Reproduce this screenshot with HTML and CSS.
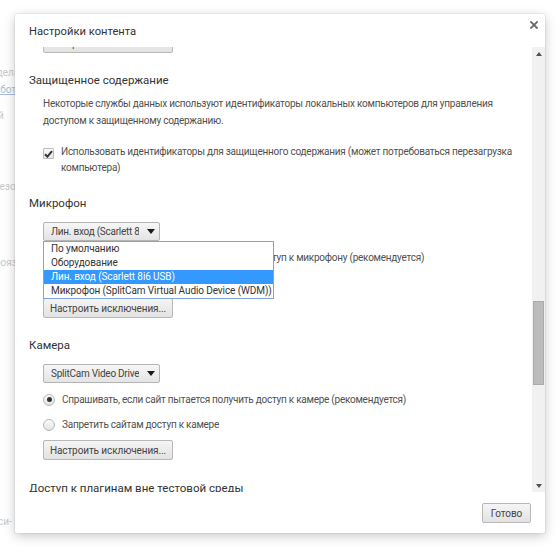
FILE: index.html
```html
<!DOCTYPE html>
<html lang="ru">
<head>
<meta charset="utf-8">
<title>Настройки контента</title>
<link rel="stylesheet" href="styles.css">
</head>
<body>
<div class="page">
  <div class="bgline l1">Разделать</div>
  <div class="bgline l2 link">обработка</div>
  <div class="bgline l3">й</div>
  <div class="bgline l4">безопасность</div>
  <div class="bgline l5">боязнь</div>
  <div class="bgline l6">си-</div>
</div>

<div class="dialog">
  <div class="dlg-head">
    <div class="dlg-title">Настройки контента</div>
    <svg class="close" width="8" height="8" viewBox="0 0 8 8"><path d="M1 1L7 7M7 1L1 7" stroke="#6a6a6a" stroke-width="1.8" stroke-linecap="square"/></svg>
  </div>
  <div class="dlg-body">
    <div class="scroll">
      <div class="scroll-inner">
        <div class="indent"><div class="btn btn-wide">Настроить исключения...</div></div>

        <div class="sec-title s-protected">Защищенное содержание</div>
        <div class="indent desc">Некоторые службы данных используют идентификаторы локальных компьютеров для управления<br>доступом к защищенному содержанию.</div>
        <div class="indent check-row">
          <span class="checkbox"><svg width="9" height="8" viewBox="0 0 9 8"><path d="M1 4.2L3.4 6.6L8 1.2" fill="none" stroke="#333" stroke-width="2"/></svg></span>
          <span class="check-text">Использовать идентификаторы для защищенного содержания (может потребоваться перезагрузка<br>компьютера)</span>
        </div>

        <div class="sec-title s-mic">Микрофон</div>
        <div class="indent select-wrap">
          <div class="select"><span class="select-text">Лин. вход (Scarlett 8i6 USB)</span><span class="arrow"></span></div>
          <div class="droplist">
            <div class="opt">По умолчанию</div>
            <div class="opt">Оборудование</div>
            <div class="opt sel">Лин. вход (Scarlett 8i6 USB)</div>
            <div class="opt">Микрофон (SplitCam Virtual Audio Device (WDM))</div>
          </div>
        </div>
        <div class="indent radio-row first"><span class="radio on"></span><span>Спрашивать, если сайт пытается получить доступ к микрофону (рекомендуется)</span></div>
        <div class="indent radio-row"><span class="radio"></span><span>Запретить сайтам доступ к микрофону</span></div>
        <div class="indent btn-row"><div class="btn btn-wide">Настроить исключения...</div></div>

        <div class="sec-title s-cam">Камера</div>
        <div class="indent select-wrap">
          <div class="select"><span class="select-text">SplitCam Video Driver</span><span class="arrow"></span></div>
        </div>
        <div class="indent radio-row first"><span class="radio on"></span><span>Спрашивать, если сайт пытается получить доступ к камере (рекомендуется)</span></div>
        <div class="indent radio-row"><span class="radio"></span><span>Запретить сайтам доступ к камере</span></div>
        <div class="indent btn-row"><div class="btn btn-wide">Настроить исключения...</div></div>

        <div class="sec-title s-plugins">Доступ к плагинам вне тестовой среды</div>
        <div class="indent desc">Разрешить всем сайтам использовать плагины для доступа к компьютеру</div>
      </div>
    </div>
    <div class="scrollbar">
      <div class="sb-btn"><span class="tri-up"></span></div>
      <div class="sb-track"><div class="sb-thumb"></div></div>
      <div class="sb-btn"><span class="tri-down"></span></div>
    </div>
  </div>
  <div class="dlg-foot">
    <div class="btn btn-done">Готово</div>
  </div>
</div>
</body>
</html>
```

FILE: styles.css
```css
* { box-sizing: border-box; }
html, body { margin: 0; padding: 0; }
body {
  width: 560px;
  height: 553px;
  overflow: hidden;
  background: #fff;
  font-family: Roboto, "Noto Sans", sans-serif;
  font-size: 10px;
  letter-spacing: -0.25px;
  color: #444;
  position: relative;
}

/* faded page behind the dialog */
.page { padding-top: 65px; }
.bgline {
  height: 16px;
  line-height: 16px;
  margin-left: -20px;
  color: #c9c9c9;
  white-space: nowrap;
  font-size: 10px;
  letter-spacing: 0;
}
.bgline.link { color: #a9bde0; text-decoration: underline; }
.l2 { margin-top: 1px; margin-left: -22px; }
.l3 { margin-top: 10px; margin-left: -2px; }
.l4 { margin-top: 55px; margin-left: -6px; }
.l5 { margin-top: 60px; margin-left: -5px; }
.l6 { margin-top: 243px; margin-left: -2px; }

/* dialog */
.dialog {
  position: absolute;
  left: 15px;
  top: 14px;
  width: 530px;
  height: 519px;
  background: #fff;
  border-radius: 2px;
  box-shadow: 0 3px 12px rgba(0,0,0,0.22), 0 0 0 1px rgba(0,0,0,0.05);
  display: flex;
  flex-direction: column;
}
.dlg-head {
  height: 33px;
  padding: 9px 14px 0;
  position: relative;
  flex: none;
}
.dlg-title {
  font-size: 11.2px;
  letter-spacing: 0;
  line-height: 18px;
  color: #333;
}
.close {
  position: absolute;
  top: 7px;
  right: 7px;
}
.dlg-body {
  height: 445px;
  flex: none;
  display: flex;
}
.scroll {
  flex: 1;
  overflow: hidden;
  padding: 0 14px;
}
.scroll-inner { margin-top: -14px; }
.indent { padding-left: 14px; }

.sec-title {
  font-size: 11.5px;
  letter-spacing: 0;
  line-height: 18px;
  color: #333;
  white-space: nowrap;
}
.s-protected { margin-top: 18px; }
.s-mic { margin-top: 18px; }
.s-cam { margin-top: 18px; }
.s-plugins { margin-top: 19px; }

.desc {
  margin-top: 6px;
  line-height: 17px;
  white-space: nowrap;
  color: #505050;
}

.check-row {
  margin-top: 15px;
  display: flex;
  align-items: flex-start;
  line-height: 16px;
  color: #505050;
}
.checkbox {
  flex: none;
  width: 11px;
  height: 11px;
  margin-top: 4px;
  margin-right: 7px;
  border: 1px solid #bdbdbd;
  border-radius: 1px;
  background: linear-gradient(#fafafa, #e6e6e6);
  display: flex;
  align-items: center;
  justify-content: center;
}
.check-text { white-space: nowrap; }

.select-wrap {
  margin-top: 10px;
  position: relative;
}
.select {
  width: 117px;
  height: 19px;
  border: 1px solid #b4b4b4;
  border-radius: 2px;
  background: linear-gradient(#f6f6f6, #e4e4e4);
  display: flex;
  align-items: center;
  padding: 0 4px 0 7px;
  color: #444;
}
.select-text {
  flex: 1;
  overflow: hidden;
  white-space: nowrap;
  line-height: 17px;
}
.arrow {
  flex: none;
  margin-left: 8px;
  width: 0;
  height: 0;
  border-left: 4px solid transparent;
  border-right: 4px solid transparent;
  border-top: 5px solid #1a1a1a;
}

.droplist {
  position: absolute;
  left: 14px;
  top: 19px;
  width: 231px;
  border: 1px solid #7ea4d9;
  background: #fff;
  z-index: 2;
}
.opt {
  height: 14px;
  line-height: 14px;
  padding-left: 7px;
  white-space: nowrap;
  color: #333;
  letter-spacing: -0.1px;
}
.opt.sel { background: #3399ff; color: #fff; }

.radio-row {
  display: flex;
  align-items: center;
  height: 17px;
  margin-top: 8px;
  color: #505050;
  white-space: nowrap;
}
.radio {
  flex: none;
  width: 12px;
  height: 12px;
  margin-right: 7px;
  border: 1px solid #b9b9b9;
  border-radius: 50%;
  background: linear-gradient(#fafafa, #e4e4e4);
  display: flex;
  align-items: center;
  justify-content: center;
}
.radio.on::after {
  content: "";
  width: 5px;
  height: 5px;
  border-radius: 50%;
  background: #333;
}

.btn-row { margin-top: 7px; }
.btn {
  display: inline-flex;
  align-items: center;
  justify-content: center;
  height: 19px;
  border: 1px solid #b8b8b8;
  border-radius: 2px;
  background: linear-gradient(#f5f5f5, #e2e2e2);
  color: #444;
  white-space: nowrap;
  letter-spacing: -0.1px;
}
.btn-wide { width: 130px; height: 20px; }

/* scrollbar */
.scrollbar {
  flex: none;
  width: 13px;
  background: #f1f1f1;
  display: flex;
  flex-direction: column;
}
.sb-btn {
  height: 13px;
  flex: none;
  display: flex;
  align-items: center;
  justify-content: center;
}
.tri-up {
  width: 0; height: 0;
  border-left: 3px solid transparent;
  border-right: 3px solid transparent;
  border-bottom: 4px solid #505050;
}
.tri-down {
  width: 0; height: 0;
  border-left: 3px solid transparent;
  border-right: 3px solid transparent;
  border-top: 4px solid #505050;
}
.sb-track { flex: 1; padding: 0 1px; }
.sb-thumb {
  margin-top: 241px;
  height: 84px;
  background: #bcbcbc;
  border: 1px solid #ababab;
}

.dlg-foot {
  flex: 1;
  display: flex;
  justify-content: flex-end;
  align-items: flex-start;
  padding: 11px 14px 0;
}
.btn-done { width: 49px; height: 20px; color: #444; }
```
